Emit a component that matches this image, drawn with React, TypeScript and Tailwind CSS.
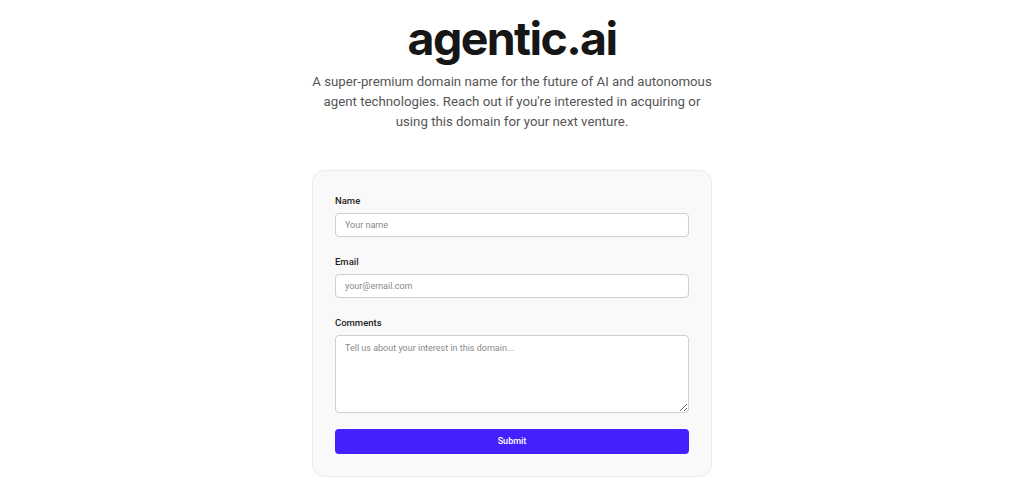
export default function App() {
  return (
    <div className="min-h-screen bg-white flex flex-col items-center pt-[10px]" style={{ fontFamily: 'Roboto, "Liberation Sans", sans-serif' }}>
      <h1 className="font-['Inter',sans-serif] text-[46.5px] font-bold tracking-[-0.035em] leading-[56px] text-[#161616]">agentic.ai</h1>
      <p className="mt-[6px] max-w-[410px] text-center text-[13.25px] leading-5 text-[#555555]">
        A super-premium domain name for the future of AI and autonomous agent technologies. Reach out if you're interested in acquiring or using this domain for your next venture.
      </p>

      <form className="mt-[38px] w-[400px] rounded-xl border border-[#ececec] bg-[#f9f9f9] p-[22px]" onSubmit={e => e.preventDefault()}>
        <div className="mb-[17px]">
          <label className="block mb-[5px] text-[9.5px] leading-[15px] font-medium text-[#1f1f1f]">Name</label>
          <input
            className="block w-full h-6 rounded-[4px] border border-[#cfcfcf] bg-white px-[9px] text-[9px] text-[#222] placeholder:text-[#8a8a8a] outline-none"
            placeholder="Your name"
          />
        </div>
        <div className="mb-[17px]">
          <label className="block mb-[5px] text-[9.5px] leading-[15px] font-medium text-[#1f1f1f]">Email</label>
          <input
            className="block w-full h-6 rounded-[4px] border border-[#cfcfcf] bg-white px-[9px] text-[9px] text-[#222] placeholder:text-[#8a8a8a] outline-none"
            placeholder="your@email.com"
          />
        </div>
        <div className="mb-4">
          <label className="block mb-[5px] text-[9.5px] leading-[15px] font-medium text-[#1f1f1f]">Comments</label>
          <textarea
            className="block w-full h-[78px] rounded-[4px] border border-[#cfcfcf] bg-white px-[9px] py-[6px] text-[9px] text-[#222] placeholder:text-[#8a8a8a] outline-none"
            placeholder="Tell us about your interest in this domain..."
          />
        </div>
        <button type="submit" className="block w-full h-[25px] rounded-[4px] bg-[#4520ff] text-white text-[9px] font-medium">
          Submit
        </button>
      </form>
    </div>
  )
}
